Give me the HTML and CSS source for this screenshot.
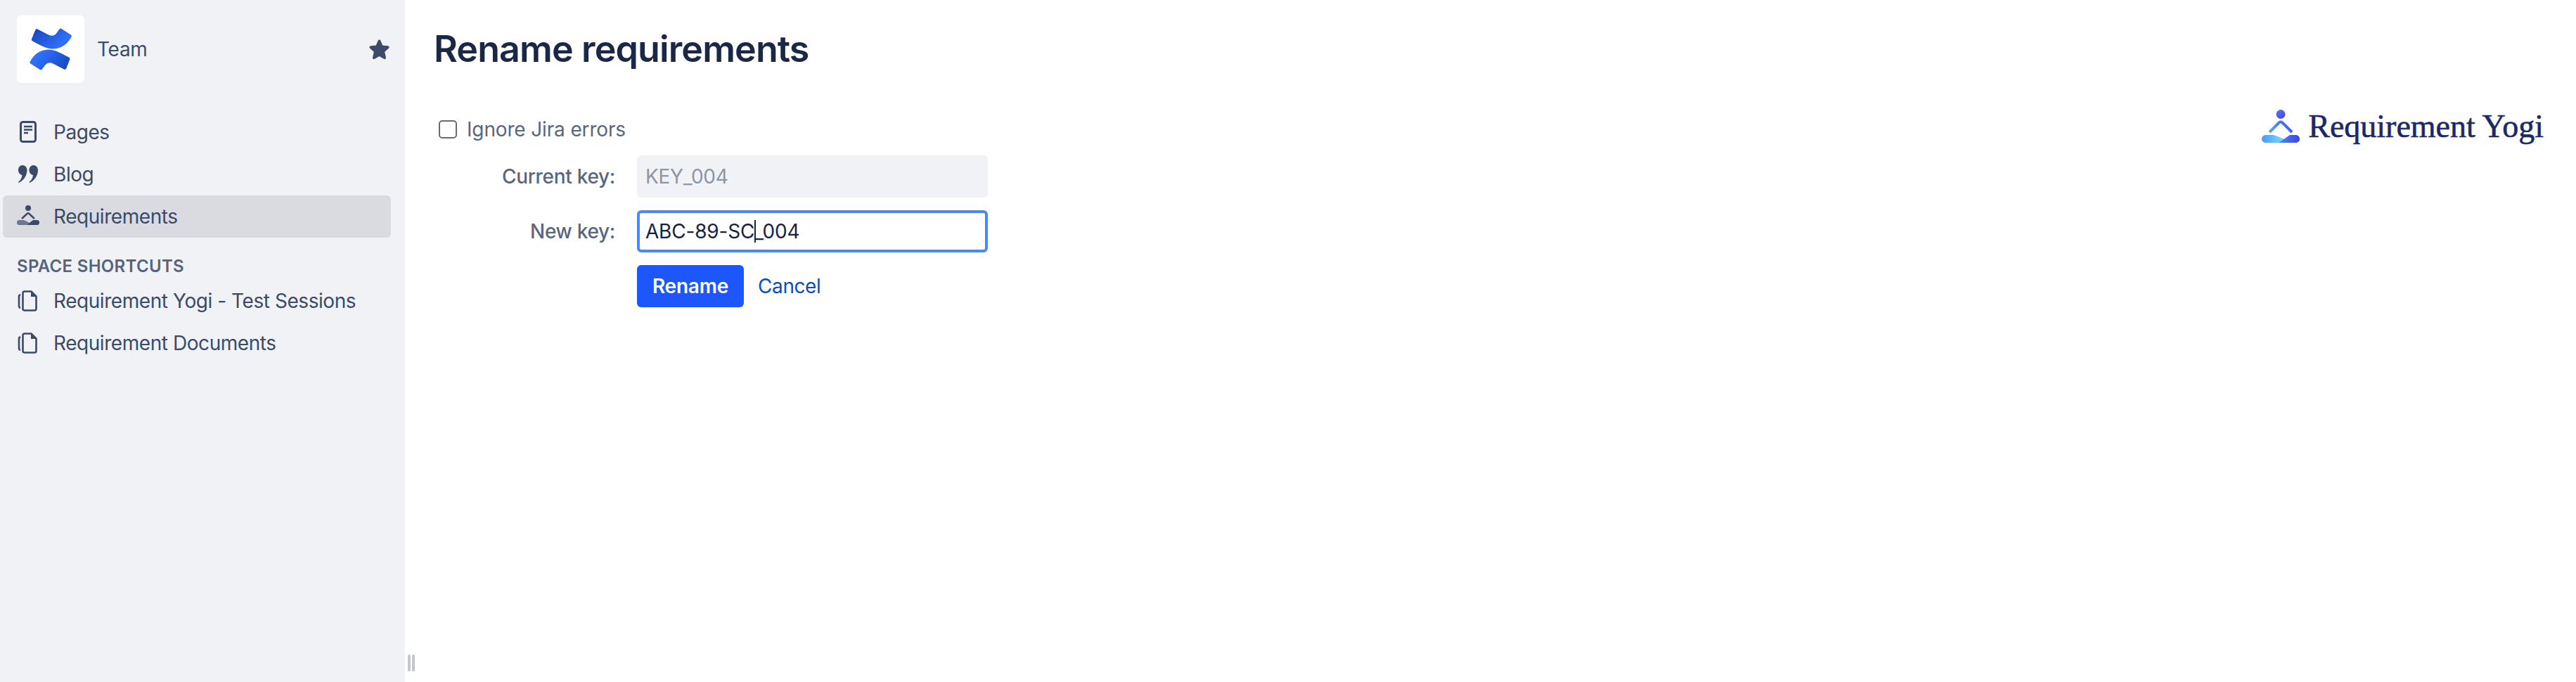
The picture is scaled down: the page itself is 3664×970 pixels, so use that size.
FILE: index.html
```html
<!DOCTYPE html>
<html lang="en">
<head>
<meta charset="utf-8">
<title>Rename requirements</title>
<link rel="stylesheet" href="styles.css">
</head>
<body>
<div class="app">
  <aside class="sidebar">
    <header class="space">
      <div class="space-logo">
        <svg viewBox="0 0 96 96" width="96" height="96">
          <defs>
            <linearGradient id="cfTop" x1="25" y1="18" x2="55" y2="48" gradientUnits="userSpaceOnUse">
              <stop offset="0" stop-color="#1846bd"/><stop offset="1" stop-color="#2f6ffb"/>
            </linearGradient>
            <linearGradient id="cfBottom" x1="38" y1="50" x2="70" y2="78" gradientUnits="userSpaceOnUse">
              <stop offset="0" stop-color="#2f6ffb"/><stop offset="1" stop-color="#1846bd"/>
            </linearGradient>
          </defs>
          <path fill="url(#cfTop)" d="M29.5 19.5 45 27.5C50 29.8 53.5 29 56.5 25L60.5 19.5C61.3 18.5 62.5 18.3 63.5 19L76.8 27.5C77.9 28.2 78.1 29.5 77.5 30.6 72 40.5 64 47.3 52 47.6 44 47.8 36 44 22 36.3 21 35.7 20.6 34.7 21 33.6L26.2 20.8C26.8 19.3 28.2 18.9 29.5 19.5Z"/>
          <path fill="url(#cfBottom)" d="M67 76.5 51.5 68.5C46.5 66.2 43 67 40 71L35.8 76.5C35 77.5 33.8 77.7 32.8 77L19.5 68.5C18.4 67.8 18.2 66.5 18.8 65.4 24.3 55.5 32.3 48.7 44.3 48.4 52.3 48.2 60.3 52 74.3 59.7 75.3 60.3 75.7 61.3 75.3 62.4L70.3 75.2C69.7 76.7 68.3 77.1 67 76.5Z"/>
        </svg>
      </div>
      <span class="space-name">Team</span>
      <svg class="star" viewBox="0 0 29 29" width="29" height="29">
        <path fill="#3b4a68" d="M14.5 0.5C15.4 0.5 16 1 16.4 2L19.2 8.6 26.6 9.3C28.6 9.5 29.3 11.4 27.8 12.8L22.2 17.8 23.9 25.6C24.3 27.6 22.7 28.8 21 27.8L14.5 24 8 27.8C6.300 28.8 4.700 27.6 5.100 25.600L6.800 17.800 1.200 12.800C-0.300 11.400 0.400 9.500 2.400 9.300L9.800 8.600 12.600 2C13 1 13.600 0.500 14.500 0.500Z"/>
      </svg>
    </header>

    <nav class="nav">
      <a class="nav-item">
        <span class="nav-icon">
          <svg viewBox="0 0 32 32" width="32" height="32">
            <rect x="5.500" y="1.500" width="21" height="28" rx="3" fill="none" stroke="#3b4a68" stroke-width="3"/>
            <path d="M10 8h12M10 12.500h12M10 17h6" stroke="#3b4a68" stroke-width="2.600" fill="none"/>
          </svg>
        </span>
        <span>Pages</span>
      </a>
      <a class="nav-item">
        <span class="nav-icon">
          <svg viewBox="0 0 32 32" width="32" height="32">
            <path fill="#3b4a68" d="M8 3C11.800 3 14.500 6 14.500 10 14.500 17.500 10 24.500 2.500 28L2 26.800C5 24.500 7 21.500 7.500 17 4.500 16.500 2 14 2 10 2 6 4.500 3 8 3Z"/>
            <path fill="#3b4a68" d="M23.500 3C27.300 3 30 6 30 10 30 17.500 25.500 24.500 18 28L17.500 26.800C20.500 24.500 22.500 21.500 23 17 20 16.500 17.500 14 17.500 10 17.500 6 20 3 23.500 3Z"/>
          </svg>
        </span>
        <span>Blog</span>
      </a>
      <a class="nav-item is-active">
        <span class="nav-icon">
          <svg viewBox="0 0 32 32" width="32" height="32">
            <circle cx="16" cy="4" r="4" fill="#3b4a68"/>
            <path d="M7 19 14.500 12C15.400 11.200 16.600 11.200 17.500 12L25 19" fill="none" stroke="#3b4a68" stroke-width="2.400"/>
            <path fill="#6d7890" d="M3 21H10L19 25.500 14 28H3C1 28 0 26.500 0 24.500 0 22.500 1 21 3 21Z"/>
            <path fill="#3b4a68" d="M29 21C31 21 32 22.500 32 24.500 32 26.500 31 28 29 28H14L23 21Z"/>
          </svg>
        </span>
        <span>Requirements</span>
      </a>
    </nav>

    <h2 class="nav-heading">SPACE SHORTCUTS</h2>

    <nav class="nav">
      <a class="nav-item">
        <span class="nav-icon">
          <svg viewBox="0 0 32 32" width="32" height="32">
            <path d="M11 2.500H20.500L27.500 9.500V27C27.500 28.700 26.600 29.500 25 29.500H11C9.400 29.500 8.500 28.700 8.500 27V5C8.500 3.300 9.400 2.500 11 2.500Z" fill="none" stroke="#3b4a68" stroke-width="2.600"/>
            <path d="M20 2.500V10H27.500" fill="#3b4a68"/>
            <path d="M5 7C3.500 7.500 3 8.500 3 10V23C3 24.500 3.500 25.500 5 26" fill="none" stroke="#3b4a68" stroke-width="2.600"/>
          </svg>
        </span>
        <span>Requirement Yogi - Test Sessions</span>
      </a>
      <a class="nav-item">
        <span class="nav-icon">
          <svg viewBox="0 0 32 32" width="32" height="32">
            <path d="M11 2.500H20.500L27.500 9.500V27C27.500 28.700 26.600 29.500 25 29.500H11C9.400 29.500 8.500 28.700 8.500 27V5C8.500 3.300 9.400 2.500 11 2.500Z" fill="none" stroke="#3b4a68" stroke-width="2.600"/>
            <path d="M20 2.500V10H27.500" fill="#3b4a68"/>
            <path d="M5 7C3.500 7.500 3 8.500 3 10V23C3 24.500 3.500 25.500 5 26" fill="none" stroke="#3b4a68" stroke-width="2.600"/>
          </svg>
        </span>
        <span>Requirement Documents</span>
      </a>
    </nav>
    <div class="resize-handle"><i></i><i></i></div>
  </aside>

  <main class="content">
    <section class="page">
      <h1 class="title">Rename requirements</h1>
      <form class="form">
        <label class="check-row">
          <input class="check" type="checkbox">
          <span>Ignore Jira errors</span>
        </label>
        <div class="field-grid">
          <span class="field-label">Current key:</span>
          <div class="field field-disabled">KEY_004</div>
          <span class="field-label">New key:</span>
          <div class="field field-focus">ABC-89-SC<span class="caret"></span>_004</div>
          <div class="actions">
            <button class="btn" type="button">Rename</button>
            <a class="cancel">Cancel</a>
          </div>
        </div>
      </form>
    </section>

    <aside class="brand">
      <svg viewBox="0 0 54 47" width="54" height="47">
        <defs>
          <linearGradient id="ryHead" x1="0" y1="0" x2="1" y2="1">
            <stop offset="0" stop-color="#4f7cf5"/><stop offset="1" stop-color="#4a3fe0"/>
          </linearGradient>
          <linearGradient id="ryArm" gradientUnits="userSpaceOnUse" x1="11" y1="32" x2="43" y2="18">
            <stop offset="0" stop-color="#4fa9fa"/><stop offset="1" stop-color="#3e55ea"/>
          </linearGradient>
          <linearGradient id="ryLeft" x1="0" y1="0" x2="1" y2="0">
            <stop offset="0" stop-color="#4a9bf8"/><stop offset="1" stop-color="#86e0fb"/>
          </linearGradient>
          <linearGradient id="ryRight" x1="0" y1="0" x2="1" y2="0">
            <stop offset="0" stop-color="#3f8df5"/><stop offset="1" stop-color="#4540e2"/>
          </linearGradient>
        </defs>
        <circle cx="27" cy="6.500" r="6.500" fill="url(#ryHead)"/>
        <path d="M11 32 24.500 18.500C26 17.200 28 17.200 29.500 18.500L43 32" fill="none" stroke="url(#ryArm)" stroke-width="4"/>
        <path fill="url(#ryLeft)" d="M6 36H17L36 43 28 47H6C2 47 0 44.500 0 41.500 0 38.500 2 36 6 36Z"/>
        <path fill="url(#ryRight)" d="M48 36C52 36 54 38.500 54 41.500 54 44.500 52 47 48 47H24L40 36Z"/>
      </svg>
      <span class="brand-name">Requirement Yogi</span>
    </aside>
  </main>
</div>
</body>
</html>
```
FILE: styles.css
```css
* { box-sizing: border-box; }
html, body { margin: 0; height: 100%; background: #fff; overflow: hidden; }
body { font-family: Inter, "Liberation Sans", sans-serif; font-size: 28px; letter-spacing: -0.3px; color: #42526e; }
.app { display: flex; height: 970px; }

.sidebar { position: relative; flex: 0 0 576px; background: #f1f2f6; padding-top: 22px; }
.space { display: flex; align-items: center; padding: 0 22px 0 24px; height: 96px; margin-bottom: 40px; }
.space-logo { width: 96px; height: 96px; background: #fff; border-radius: 6px; flex: none; }
.space-logo svg { display: block; }
.space-name { margin-left: 18px; color: #3f4d69; }
.star { margin-left: auto; }

.nav { display: flex; flex-direction: column; }
.nav-item { display: flex; align-items: center; height: 60px; margin: 0 20px 0 4px; padding-left: 20px; gap: 20px; border-radius: 6px; letter-spacing: -0.44px; color: #3b4a68; }
.nav-item.is-active { background: #dadbe0; }
.nav-icon { width: 32px; height: 32px; flex: none; }
.nav-icon svg { display: block; }
.nav-heading { margin: 0; padding: 20px 0 0 24px; height: 60px; display: flex; align-items: center; font-size: 24px; font-weight: 600; letter-spacing: 0.3px; color: #56637d; }

.resize-handle { position: absolute; left: 580px; top: 931px; display: flex; gap: 2px; height: 24px; }
.resize-handle i { width: 4px; height: 24px; border-radius: 2px; background: #c1c6d0; }

.content { flex: 1; display: flex; justify-content: space-between; padding-left: 41px; }
.title { margin: 0; height: 138px; display: flex; align-items: center; font-size: 52px; font-weight: 600; color: #1a2747; letter-spacing: -0.9px; }
.form { display: flex; flex-direction: column; }
.check-row { display: flex; align-items: center; height: 48px; margin: 22px 0 0 1px; padding-left: 6px; gap: 14px; letter-spacing: -0.15px; color: #5a667e; }
.check { appearance: none; width: 26px; height: 26px; margin: 0; border: 2.500px solid #6b6b6b; border-radius: 5px; background: #fff; }
.field-grid { display: grid; grid-template-columns: 258px 499px; column-gap: 31px; row-gap: 18px; margin-top: 13px; }
.field-label { display: flex; align-items: center; justify-content: flex-end; font-weight: 500; color: #5a667e; height: 60px; }
.field { display: flex; align-items: center; height: 60px; padding-left: 12px; border-radius: 6px; }
.field-disabled { background: #f1f2f6; color: #8e96a6; }
.field-focus { border: 4px solid #4c86f9; padding-left: 8px; letter-spacing: -0.2px; color: #172344; }
.caret { display: inline-block; width: 2px; height: 32px; margin-right: -2px; background: #172344; }
.actions { grid-column: 2; display: flex; align-items: center; gap: 20px; }
.btn { width: 152px; height: 60px; border: 0; border-radius: 6px; background: #1d57fc; color: #fff; font: 600 28px Inter, "Liberation Sans", sans-serif; letter-spacing: -0.2px; padding: 0; }
.cancel { color: #0b4cc4; letter-spacing: -0.4px; }

.brand { display: flex; align-items: flex-start; gap: 12px; padding: 156px 46px 0 0; }
.brand svg { display: block; flex: none; }
.brand-name { font-family: "Liberation Serif", serif; font-size: 46px; line-height: 47px; letter-spacing: 0; color: #1b2a66; -webkit-text-stroke: 0.6px #1b2a66; }
```
